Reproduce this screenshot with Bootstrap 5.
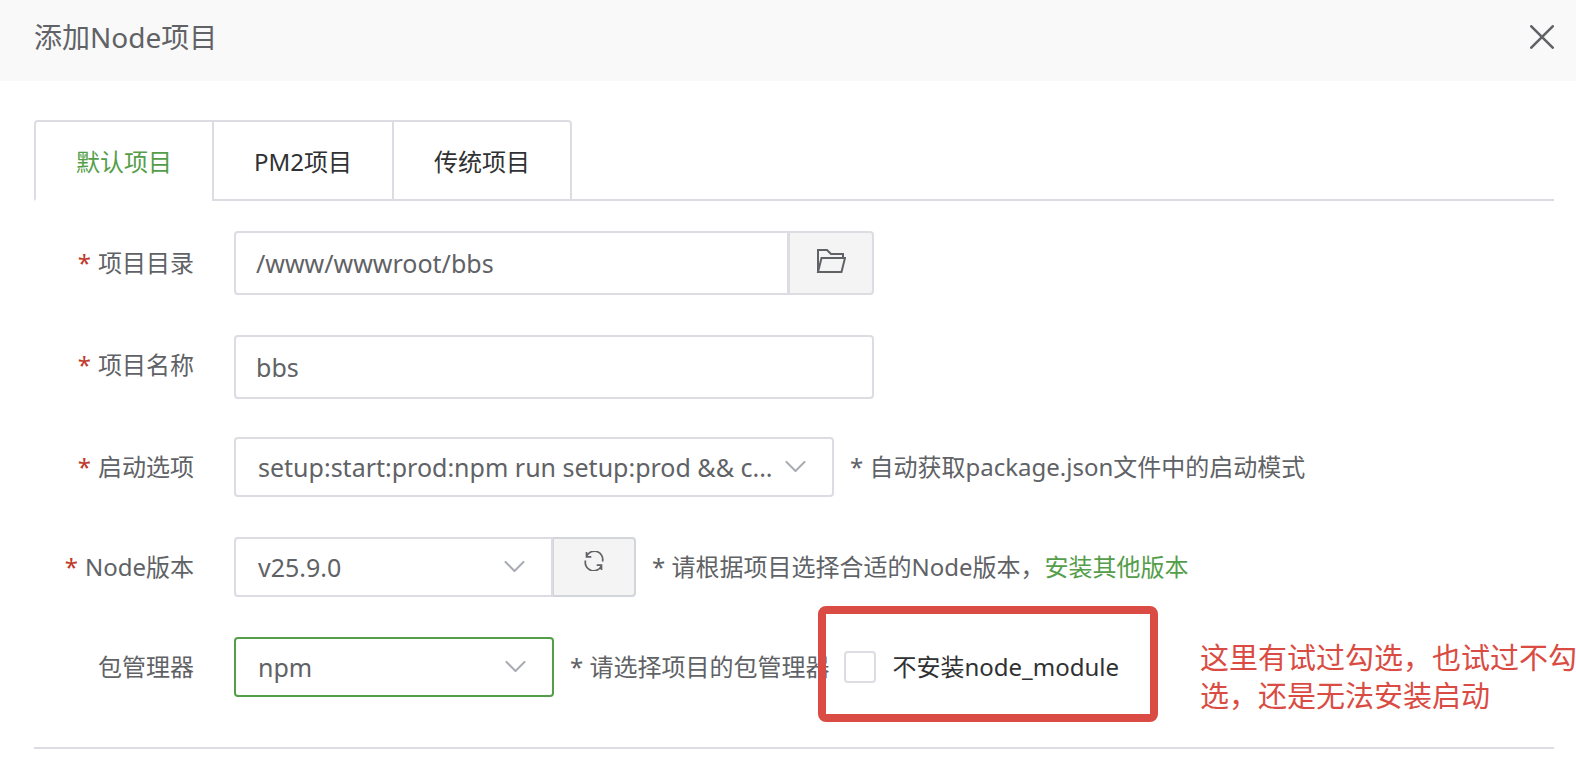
<!DOCTYPE html>
<html lang="zh-CN">
<head>
<meta charset="utf-8">
<meta name="viewport" content="width=device-width, initial-scale=1">
<title>添加Node项目</title>
<link href="https://cdn.jsdelivr.net/npm/bootstrap@5.3.0/dist/css/bootstrap.min.css" rel="stylesheet">
<style>
  :root { --line: #dcdce2; --ink: #606266; --green: #549e49; --alert: #da4c43; }
  body { font-family: "Noto Sans", "Noto Sans CJK SC", sans-serif; font-size: 24px; line-height: 36px; color: var(--ink); overflow-x: hidden; }
  .dialog-head { background: #f9f9f9; padding: 15px 22px 22px 34px; }
  .dialog-title { font-size: 28px; line-height: 44px; font-weight: 400; }
  .icon-btn { background: none; border: 0; padding: 0; color: var(--ink); line-height: 0; }
  .dialog-body { padding: 39px 22px 0 34px; }

  .project-tabs { --bs-nav-tabs-border-width: 2px; border-bottom: 2px solid var(--line); }
  .project-tabs .nav-link { margin: 0 0 -2px -2px; padding: 22px 40px 19px; border: 2px solid var(--line); border-radius: 0; color: #303133; line-height: 36px; }
  .project-tabs .nav-item:first-child .nav-link { margin-left: 0; border-top-left-radius: 4px; }
  .project-tabs .nav-item:last-child .nav-link { border-top-right-radius: 4px; }
  .project-tabs .nav-link.active { color: var(--green); background: #fff; border-color: var(--line) var(--line) #fff; }

  .project-form { padding-top: 30px; padding-bottom: 50px; border-bottom: 2px solid var(--line); }
  .form-line { margin-bottom: 40px; }
  .form-line:nth-child(2) { margin-bottom: 38px; }
  .form-line:last-child { margin-bottom: 0; }
  .field-label { width: 200px; padding-right: 40px; line-height: 60px; text-align: right; flex: none; }
  .req { color: #c0392b; margin-right: 7px; }

  .project-form .form-control, .project-form .form-select { border: 2px solid var(--line); border-radius: 4px; font-size: 25px; line-height: 36px; color: var(--ink); padding: 12px 20px; box-shadow: none; }
  .project-form .form-control { height: 64px; }
  .project-form .form-select { height: 60px; padding: 10px 52px 10px 22px; background: #fff url("data:image/svg+xml,%3Csvg xmlns='http://www.w3.org/2000/svg' viewBox='0 0 20 12'%3E%3Cpath d='M1 1l9 9 9-9' fill='none' stroke='%23a8abb2' stroke-width='2' stroke-linecap='round' stroke-linejoin='round'/%3E%3C/svg%3E") no-repeat right 26px center / 21px 12px; }
  .project-form .form-select.picked { border-color: var(--green); }
  .w-field { width: 640px; }
  .w-start { width: 600px; flex: none; }
  .w-version { width: 402px; flex: none; }
  .w-manager { width: 320px; flex: none; }
  .addon { background: #f4f4f4; border: 2px solid var(--line); border-radius: 4px; width: 86px; padding: 0 0 4px; color: var(--ink); line-height: 0; }
  .addon.reload { width: 84px; border-color: #d2d6da; padding-bottom: 12px; }
  .hint { margin-left: 16px; white-space: nowrap; }
  .hint a { color: var(--green); text-decoration: none; }

  .skip-install { margin-left: 15px; color: #303133; gap: 16px; white-space: nowrap; }
  .skip-install .form-check-input { width: 32px; height: 32px; margin: 0; border: 2px solid var(--line); border-radius: 4px; }
  .callout-frame { position: absolute; inset: -43px -39px -37px -26px; border: 8px solid var(--alert); border-radius: 8px; pointer-events: none; }
  .callout-note { position: absolute; left: calc(100% + 81px); top: -10px; margin: 0; color: var(--alert); font-size: 29px; line-height: 38px; }
</style>
</head>
<body>
<header class="dialog-head d-flex justify-content-between align-items-center">
  <h1 class="dialog-title mb-0">添加Node项目</h1>
  <button type="button" class="icon-btn" aria-label="关闭">
    <svg width="24" height="24" viewBox="0 0 24 24" fill="none" stroke="currentColor" stroke-width="2.6" stroke-linecap="round"><path d="M1.3 1.3l21.4 21.4M22.7 1.3L1.3 22.7"/></svg>
  </button>
</header>

<main class="dialog-body">
  <ul class="nav nav-tabs project-tabs" role="tablist">
    <li class="nav-item" role="presentation"><button type="button" class="nav-link active" role="tab" aria-selected="true">默认项目</button></li>
    <li class="nav-item" role="presentation"><button type="button" class="nav-link" role="tab" aria-selected="false">PM2项目</button></li>
    <li class="nav-item" role="presentation"><button type="button" class="nav-link" role="tab" aria-selected="false">传统项目</button></li>
  </ul>

  <form class="project-form">
    <div class="form-line d-flex align-items-center">
      <label class="field-label" for="dir"><span class="req">*</span>项目目录</label>
      <div class="input-group w-field">
        <input type="text" class="form-control" id="dir" value="/www/wwwroot/bbs">
        <button type="button" class="addon" aria-label="选择目录">
          <svg width="30" height="26" viewBox="0 0 30 26" fill="none" stroke="currentColor" stroke-width="2"><path d="M2 24V2h9l4 4h12v4M2 24L5.500 10H29l-3.500 14z"/></svg>
        </button>
      </div>
    </div>

    <div class="form-line d-flex align-items-start">
      <label class="field-label" for="name"><span class="req">*</span>项目名称</label>
      <div class="w-field"><input type="text" class="form-control" id="name" value="bbs"></div>
    </div>

    <div class="form-line d-flex align-items-center">
      <label class="field-label" for="start"><span class="req">*</span>启动选项</label>
      <select class="form-select w-start" id="start"><option>setup:start:prod:npm run setup:prod &amp;&amp; c...</option></select>
      <span class="hint">* 自动获取package.json文件中的启动模式</span>
    </div>

    <div class="form-line d-flex align-items-center">
      <label class="field-label" for="version"><span class="req">*</span>Node版本</label>
      <div class="input-group w-version">
        <select class="form-select" id="version"><option>v25.9.0</option></select>
        <button type="button" class="addon reload" aria-label="刷新版本">
          <svg width="20" height="20" viewBox="0 0 20 20" fill="none" stroke="currentColor" stroke-width="1.700"><path d="M2.500 5.500A8.400 8.400 0 0 1 18.500 10.500M2.500 1v4.800h4.800M17.500 14.500A8.400 8.400 0 0 1 1.500 9.500M17.500 19v-4.800h-4.800"/></svg>
        </button>
      </div>
      <span class="hint">* 请根据项目选择合适的Node版本，<a href="#">安装其他版本</a></span>
    </div>

    <div class="form-line d-flex align-items-center">
      <label class="field-label" for="manager">包管理器</label>
      <select class="form-select picked w-manager" id="manager"><option>npm</option></select>
      <span class="hint">* 请选择项目的包管理器</span>
      <div class="skip-install position-relative d-flex align-items-center">
        <input type="checkbox" class="form-check-input" id="skip">
        <label for="skip">不安装node_module</label>
        <div class="callout-frame"></div>
        <p class="callout-note">这里有试过勾选，也试过不勾<br>选，还是无法安装启动</p>
      </div>
    </div>
  </form>
</main>
<script src="https://cdn.jsdelivr.net/npm/bootstrap@5.3.0/dist/js/bootstrap.bundle.min.js"></script>
</body>
</html>
